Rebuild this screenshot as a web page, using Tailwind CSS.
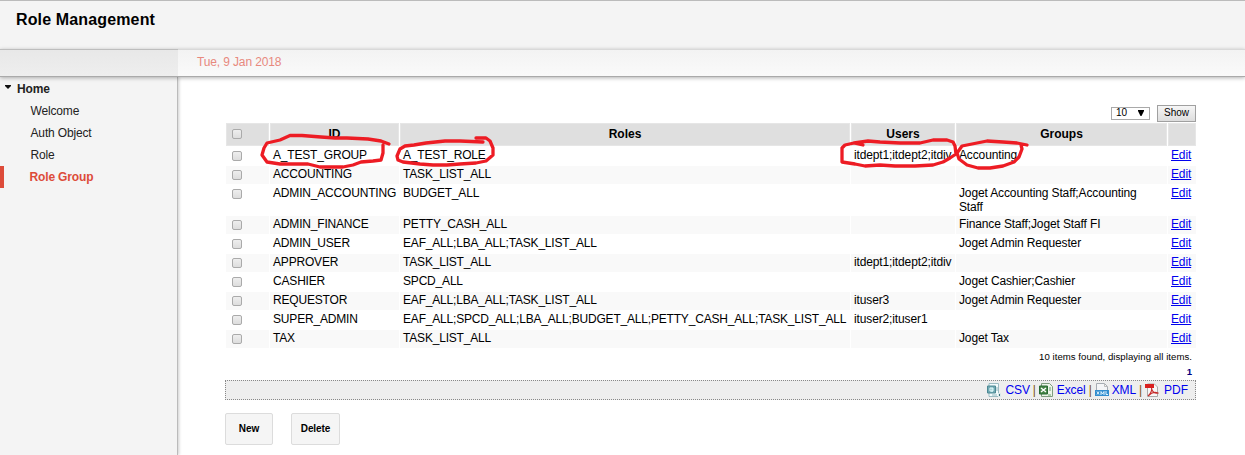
<!DOCTYPE html>
<html lang="en">
<head>
<meta charset="utf-8">
<title>Role Management</title>
<script src="https://cdn.jsdelivr.net/npm/@tailwindcss/browser@4"></script>
</head>
<body class="relative flex h-[455px] w-[1245px] flex-col overflow-hidden bg-white font-['Liberation_Sans',Arial,sans-serif] text-xs leading-[14px] text-black">
<header class="h-[49px] shrink-0 border-t border-[#bbb] bg-[#f4f4f4] pt-[9px] pl-4">
  <h1 class="text-base leading-5 font-bold tracking-[0.14px]">Role Management</h1>
</header>
<div class="relative z-10 flex h-7 shrink-0 border-b border-[#aaa] shadow-[0_1px_4px_rgba(0,0,0,0.3)]">
  <div class="w-[178px] border-t border-[#bdbdbd] bg-linear-to-b from-[#e8e8e8] to-[#eeeeee]"></div>
  <div class="flex-1 border-t border-[#d9d9d9] bg-linear-to-b from-[#f3f3f3] to-[#fafafa] pt-[5px] pl-[19px] tracking-[-0.13px] text-[#e8897e]">Tue, 9 Jan 2018</div>
</div>
<div class="flex min-h-0 flex-1">
  <nav class="w-[178px] shrink-0 border-r border-[#bbb] bg-[#f4f4f4] pt-px tracking-[-0.15px] shadow-[1px_0_3px_rgba(0,0,0,0.2)]">
    <div class="flex h-[22px] items-center gap-[6px] pl-[5px] font-bold text-[#222]"><svg class="mb-1 h-1 w-1.5" viewBox="0 0 6 4"><path d="M0 0h6v1L3 4 0 1z" fill="#111"/></svg>Home</div>
    <div class="flex h-[22px] items-center pl-[30.5px] text-[#222]">Welcome</div>
    <div class="flex h-[22px] items-center pl-[30.5px] text-[#222]">Auth Object</div>
    <div class="flex h-[22px] items-center pl-[30.5px] text-[#222]">Role</div>
    <div class="flex h-[22px] items-center border-l-4 border-[#dd4b39] pl-[25.5px] font-bold text-[#dd4b39]">Role Group</div>
  </nav>
  <main class="pt-[27px] pl-[47px]">
    <div class="flex h-[18px] w-[971px] items-center justify-end gap-[7px] text-[10px] leading-3">
      <div class="flex h-[13px] w-[39px] items-center justify-between border border-[#a9a9a9] bg-white pr-[5px] pl-1"><span>10</span><svg class="h-1.5 w-1.5" viewBox="0 0 6 6"><path d="M0 0h6v1L3.5 6h-1L0 1z"/></svg></div>
      <button class="h-[17px] w-[39px] border border-[#a0a0a0] bg-linear-to-b from-[#f6f6f6] to-[#dddddd]">Show</button>
    </div>
    <table class="w-[972px] table-fixed border-separate border-spacing-px text-left [&_i]:mt-[3px] [&_i]:ml-1.5 [&_i]:block [&_i]:h-2.5 [&_i]:w-2.5 [&_i]:rounded-xs [&_i]:border [&_i]:border-[#aaa] [&_i]:bg-linear-to-b [&_i]:from-[#eee] [&_i]:to-[#ddd] [&_td]:h-[18px] [&_td]:p-0 [&_td]:pt-px [&_td]:pl-[3px] [&_td]:align-top [&_td]:tracking-[-0.13px] [&_td]:whitespace-nowrap [&_td:first-child]:pl-0 [&_td:nth-child(2)]:tracking-[-0.18px] [&_td:nth-child(3)]:tracking-[-0.19px] [&_a]:text-[#0000ee] [&_a]:underline">
      <colgroup><col class="w-[43px]"><col class="w-[129px]"><col class="w-[450px]"><col class="w-[104px]"><col class="w-[211px]"><col class="w-[28px]"></colgroup>
      <thead><tr class="h-[23px] text-center font-bold [&>th]:border [&>th]:border-[#e6e6e6] [&>th]:bg-[#dfdfdf] [&>th]:p-0 [&>th]:pb-px"><th><i class="!mt-0 !ml-[5px]"></i></th><th>ID</th><th>Roles</th><th>Users</th><th>Groups</th><th></th></tr></thead>
      <tbody class="[&>tr:nth-child(even)>td]:bg-[#f9f9f9]">
        <tr><td><i></i></td><td>A_TEST_GROUP</td><td>A_TEST_ROLE</td><td>itdept1;itdept2;itdiv</td><td>Accounting</td><td><a>Edit</a></td></tr>
        <tr><td><i></i></td><td>ACCOUNTING</td><td>TASK_LIST_ALL</td><td></td><td></td><td><a>Edit</a></td></tr>
        <tr class="h-[30px]"><td><i></i></td><td>ADMIN_ACCOUNTING</td><td>BUDGET_ALL</td><td></td><td>Joget Accounting Staff;Accounting<br>Staff</td><td><a>Edit</a></td></tr>
        <tr><td><i></i></td><td>ADMIN_FINANCE</td><td>PETTY_CASH_ALL</td><td></td><td>Finance Staff;Joget Staff FI</td><td><a>Edit</a></td></tr>
        <tr><td><i></i></td><td>ADMIN_USER</td><td>EAF_ALL;LBA_ALL;TASK_LIST_ALL</td><td></td><td>Joget Admin Requester</td><td><a>Edit</a></td></tr>
        <tr><td><i></i></td><td>APPROVER</td><td>TASK_LIST_ALL</td><td>itdept1;itdept2;itdiv</td><td></td><td><a>Edit</a></td></tr>
        <tr><td><i></i></td><td>CASHIER</td><td>SPCD_ALL</td><td></td><td>Joget Cashier;Cashier</td><td><a>Edit</a></td></tr>
        <tr><td><i></i></td><td>REQUESTOR</td><td>EAF_ALL;LBA_ALL;TASK_LIST_ALL</td><td>ituser3</td><td>Joget Admin Requester</td><td><a>Edit</a></td></tr>
        <tr><td><i></i></td><td>SUPER_ADMIN</td><td>EAF_ALL;SPCD_ALL;LBA_ALL;BUDGET_ALL;PETTY_CASH_ALL;TASK_LIST_ALL</td><td>ituser2;ituser1</td><td></td><td><a>Edit</a></td></tr>
        <tr><td><i></i></td><td>TAX</td><td>TASK_LIST_ALL</td><td></td><td>Joget Tax</td><td><a>Edit</a></td></tr>
      </tbody>
    </table>
    <div class="h-[31px] w-[967px] text-right text-[9.6px] leading-[15px]"><p class="tracking-[0.04px]">10 items found, displaying all items.</p><p class="font-bold text-[#000080]">1</p></div>
    <div class="flex h-5 w-[971px] items-center justify-end border border-dotted border-[#888] bg-[#eee] pr-[7px] text-[#0000ee] [&_b]:mx-[3px] [&_b]:font-normal [&_b]:text-[#7a5010] [&_svg]:h-[14px] [&_svg]:w-[14px]">
      <svg viewBox="0 0 14 14"><path d="M2 .5h9.5v13H2z" fill="#f3fbfc" stroke="#9cbcc3"/><path d="M.5 3h8v7h-8z" fill="#72a9b3" stroke="#4c8994"/><path d="M3 5h3v3H3zM5 5v4" fill="none" stroke="#e6ffff"/><path d="M9 5h2M9 7h2M5 12h5" stroke="#92b8bf"/><path d="M11 10h3v4h-3z" fill="#dceaec"/><path d="M12.5 11v2" stroke="#386e78"/></svg><span class="ml-[5px] tracking-[-0.2px]">CSV</span><b>|</b>
      <svg viewBox="0 0 14 14"><path d="M2.5 .5h8l3 3v10h-11z" fill="#edf5ea" stroke="#7d9b7d"/><path d="M.5 3h8v8h-8z" fill="#458346" stroke="#286a32"/><path d="M2 5l5 4M7 5L2 9" stroke="#fff" stroke-width="1.4"/><path d="M10 5h2M10 7h2M9 12h3" stroke="#689f68"/></svg><span class="ml-1 tracking-[-0.1px]">Excel</span><b>|</b>
      <svg viewBox="0 0 14 14"><path d="M1.5 9V.5h8l3 3V9" fill="#f4f5f7" stroke="#a6acb3"/><path d="M9.5.5v3h3" fill="none" stroke="#bbb"/><path d="M0 7h14v6H0z" fill="#328dce"/><path d="M2 8.5l2 3M4 8.5l-2 3M6 12V8.5L7.5 11 9 8.5V12M11 8v3.5h2" fill="none" stroke="#e1f4ff"/></svg><span class="ml-[3px] tracking-[-0.2px]">XML</span><b>|</b>
      <svg viewBox="0 0 14 14"><path d="M2.5 1h7l3 3v9.5h-10z" fill="#f7f7f7" stroke="#aaa"/><path d="M0 1h9v4H0z" fill="#d92020"/><path d="M3 13C7 9 7 7 6.5 5 7 9 10 11 13 10 9 8 6 10 3 13z" fill="none" stroke="#c62b2b" stroke-width="1.1"/></svg><span class="ml-[5px]">PDF</span>
    </div>
    <div class="mt-[13px] flex gap-[18px] text-[10px] font-bold"><button class="h-8 w-12 rounded-xs border border-[#dcdcdc] bg-[#f5f5f5]">New</button><button class="h-8 w-[49px] rounded-xs border border-[#dcdcdc] bg-[#f5f5f5] tracking-[-0.1px]">Delete</button></div>
  </main>
</div>
<svg class="pointer-events-none absolute inset-0 z-20" width="1245" height="455" fill="none" stroke="#ed1c24" stroke-width="3.3" stroke-linecap="round" stroke-linejoin="round">
  <path d="M389 144L381 141 368 139 347 138 335 138 321 137 302 135.500 290 135.500 280 140 267 143 264 148 262 155 267 162 280 164 308 164 320 167 343 167 353 165 361 162 373 161 381 160 383 153 383 145"/>
  <path d="M476 138L486 138 490 141 493 148 493 155 486 161 476 163 460 164 447 165 433 165 420 164 403 162 398 160 397 156 400 149 405 146 414 145 426 143 445 141 460 141 483 142"/>
  <path d="M863 145L854 143 845 145 842 148 842 162 855 164 865 166 880 165 895 166 915 166 933 165 943 162 950 158 956 154 955 146 953 142 947 140 933 140 920 143 900 143 880 142 868 141 854 143"/>
  <path d="M1027 145L1017 143 1003 142 987 141 972 144 962 146 957 153 959 159 967 165 978 168 990 168 1003 166 1014 162 1019 157 1022 149 1021 145"/>
</svg>
</body>
</html>
